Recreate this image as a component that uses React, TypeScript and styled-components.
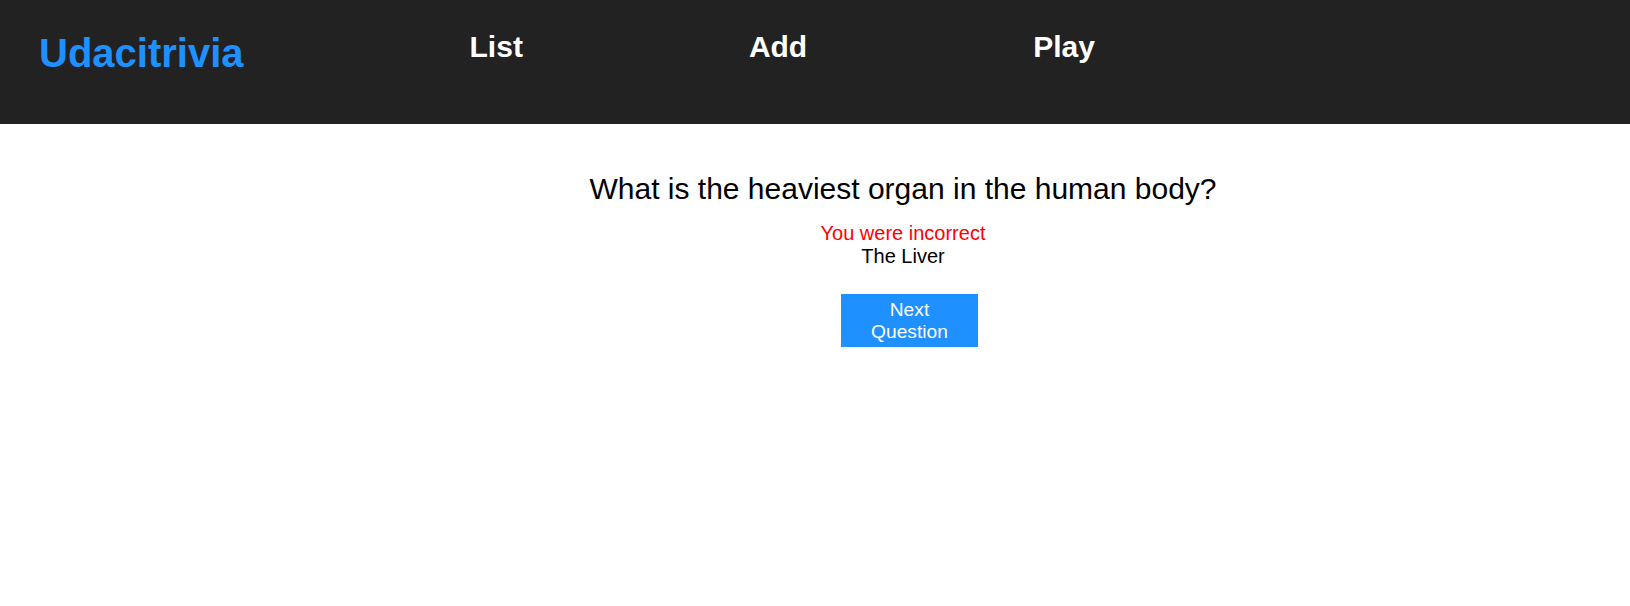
import React from "react";
import styled, { createGlobalStyle } from "styled-components";

const GlobalStyle = createGlobalStyle`
  html, body {
    margin: 0;
    padding: 0;
    background: #ffffff;
    font-family: "Liberation Sans", Arial, sans-serif;
  }
`;

const Header = styled.header`
  height: 124px;
  box-sizing: border-box;
  background-color: #222222;
  display: flex;
  flex-direction: row;
  align-items: flex-start;
  gap: 226px;
  padding: 30px 0 0 39px;
`;

const Logo = styled.h1`
  margin: 1px 0 0 0;
  font-size: 40px;
  line-height: normal;
  font-weight: 700;
  color: #1e90ff;
`;

const NavItem = styled.h2`
  margin: 0;
  font-size: 30px;
  line-height: normal;
  font-weight: 700;
  color: #ffffff;
  cursor: pointer;
`;

const Main = styled.main`
  display: flex;
  justify-content: center;
  padding-left: 176px;
`;

const QuizPlay = styled.div`
  display: flex;
  flex-direction: column;
  align-items: center;
  padding-top: 48px;
`;

const Question = styled.div`
  font-size: 30px;
  line-height: normal;
  color: #000000;
  margin-bottom: 16px;
`;

const Result = styled.div<{ $correct?: boolean }>`
  font-size: 20px;
  line-height: normal;
  color: ${(p) => (p.$correct ? "#008000" : "#ff0000")};
`;

const Answer = styled.div`
  font-size: 20px;
  line-height: normal;
  color: #000000;
`;

const NextButton = styled.button`
  margin: 26px 0 0 13px;
  width: 137px;
  height: 53px;
  box-sizing: border-box;
  padding: 4px 10px;
  border: none;
  background-color: #1e90ff;
  color: #ffffff;
  font-family: "Liberation Sans", Arial, sans-serif;
  font-size: 19.2px;
  line-height: normal;
  text-align: center;
  cursor: pointer;
`;

export default function App() {
  return (
    <>
      <GlobalStyle />
      <Header>
        <Logo>Udacitrivia</Logo>
        <NavItem>List</NavItem>
        <NavItem>Add</NavItem>
        <NavItem>Play</NavItem>
      </Header>
      <Main>
        <QuizPlay>
          <Question>What is the heaviest organ in the human body?</Question>
          <Result>You were incorrect</Result>
          <Answer>The Liver</Answer>
          <NextButton>Next Question</NextButton>
        </QuizPlay>
      </Main>
    </>
  );
}
